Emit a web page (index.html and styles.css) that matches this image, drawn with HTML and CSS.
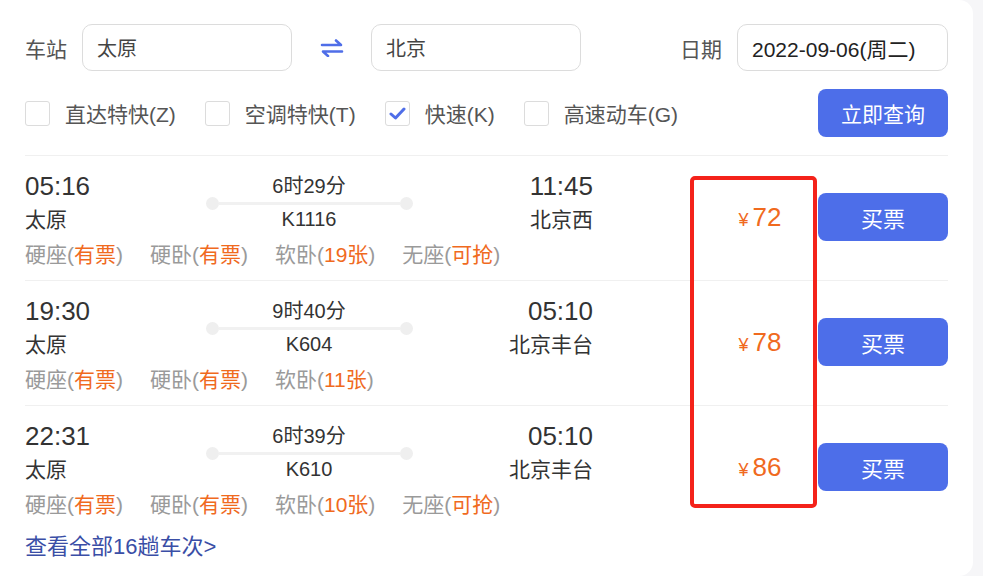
FILE: index.html
```html
<!DOCTYPE html>
<html lang="zh-CN">
<head>
    <meta charset="UTF-8">
    <meta name="viewport" content="width=device-width, initial-scale=1.0">
    <title>火车票查询</title>
    <link rel="stylesheet" href="styles.css">
</head>
<body>
    <div class="ticket-card">
        <div class="search-row">
            <span class="field-label">车站</span>
            <div class="text-input">太原</div>
            <div class="swap-icon">
                <svg width="24" height="18" viewBox="0 0 24 18" fill="none" stroke="#4f6ee8" stroke-width="2.6" stroke-linecap="round" stroke-linejoin="round">
                    <path d="M2 6h19l-5-4.5"/>
                    <path d="M22 12.5H3l5 4.5"/>
                </svg>
            </div>
            <div class="text-input">北京</div>
            <span class="field-label date-label">日期</span>
            <div class="text-input date-input">2022-09-06(周二)</div>
        </div>

        <div class="filter-row">
            <label class="check-item"><span class="check-box"></span>直达特快(Z)</label>
            <label class="check-item"><span class="check-box"></span>空调特快(T)</label>
            <label class="check-item">
                <span class="check-box checked">
                    <svg width="17" height="13" viewBox="0 0 17 13" fill="none" stroke="#4f6ee8" stroke-width="3" stroke-linecap="round" stroke-linejoin="round"><path d="M2 7l4.5 4L15 2"/></svg>
                </span>快速(K)
            </label>
            <label class="check-item"><span class="check-box"></span>高速动车(G)</label>
            <button class="search-btn">立即查询</button>
        </div>

        <div class="train-list" id="trainList">
            <!-- rows filled by script -->
        </div>

        <a class="more-link" href="#">查看全部16趟车次&gt;</a>

        <div class="price-highlight"></div>
    </div>

    <script>
        const trains = [
            { dep: '05:16', arr: '11:45', from: '太原', to: '北京西', duration: '6时29分', code: 'K1116', price: 72,
              seats: [['硬座', '有票'], ['硬卧', '有票'], ['软卧', '19张'], ['无座', '可抢']] },
            { dep: '19:30', arr: '05:10', from: '太原', to: '北京丰台', duration: '9时40分', code: 'K604', price: 78,
              seats: [['硬座', '有票'], ['硬卧', '有票'], ['软卧', '11张']] },
            { dep: '22:31', arr: '05:10', from: '太原', to: '北京丰台', duration: '6时39分', code: 'K610', price: 86,
              seats: [['硬座', '有票'], ['硬卧', '有票'], ['软卧', '10张'], ['无座', '可抢']] }
        ];

        const list = document.getElementById('trainList');
        trains.forEach(train => {
            const row = document.createElement('div');
            row.className = 'train-row';
            const seats = train.seats
                .map(s => `<span class="seat">${s[0]}(<em>${s[1]}</em>)</span>`)
                .join('');
            row.innerHTML = `
                <div class="train-info">
                    <div class="train-main">
                        <div class="col-dep">
                            <div class="time">${train.dep}</div>
                            <div class="station">${train.from}</div>
                        </div>
                        <div class="col-mid">
                            <div class="duration">${train.duration}</div>
                            <div class="track"><i></i><b></b><i></i></div>
                            <div class="code">${train.code}</div>
                        </div>
                        <div class="col-arr">
                            <div class="time">${train.arr}</div>
                            <div class="station">${train.to}</div>
                        </div>
                    </div>
                    <div class="seats">${seats}</div>
                </div>
                <div class="price"><small>¥</small>${train.price}</div>
                <button class="buy-btn">买票</button>
            `;
            list.appendChild(row);
        });
    </script>
</body>
</html>
```

FILE: styles.css
```css
body {
    margin: 0;
    background: #f6f6f8;
    font-family: "Liberation Sans", "Noto Sans CJK SC", sans-serif;
    color: #333;
}

.ticket-card {
    position: relative;
    box-sizing: border-box;
    width: 973px;
    height: 576px;
    background: white;
    border-radius: 0 14px 14px 0;
    padding: 24px 25px 0 25px;
}

/* Search Row */
.search-row {
    display: flex;
    align-items: center;
    height: 47px;
}

.field-label {
    font-size: 21px;
    color: #555;
    margin-right: 15px;
}

.date-label {
    margin-left: auto;
}

.text-input {
    box-sizing: border-box;
    width: 210px;
    height: 47px;
    border: 1px solid #dcdcdc;
    border-radius: 10px;
    padding-left: 14px;
    display: flex;
    align-items: center;
    font-size: 20px;
    color: #444;
}

.date-input {
    width: 211px;
    font-size: 21px;
    color: #222;
}

.swap-icon {
    width: 79px;
    display: flex;
    justify-content: center;
    align-items: center;
}

/* Filter Row */
.filter-row {
    display: flex;
    align-items: center;
    margin-top: 18px;
    height: 48px;
}

.check-item {
    display: flex;
    align-items: center;
    font-size: 21px;
    color: #555;
    margin-right: 29px;
}

.check-box {
    box-sizing: border-box;
    width: 25px;
    height: 25px;
    border: 1px solid #dcdcdc;
    border-radius: 3px;
    margin-right: 15px;
    display: flex;
    align-items: center;
    justify-content: center;
}

.search-btn {
    margin-left: auto;
    width: 130px;
    height: 48px;
    border: none;
    border-radius: 8px;
    background: #4d6ee9;
    color: white;
    font-family: inherit;
    font-size: 21px;
}

/* Train List */
.train-list {
    margin-top: 18px;
}

.train-row {
    box-sizing: border-box;
    height: 125px;
    border-top: 1px solid #f0f0f0;
    padding-top: 14px;
    display: flex;
}

.train-info {
    width: 568px;
}

.train-main {
    display: grid;
    grid-template-columns: 1fr 207px 1fr;
}

.time,
.station,
.duration,
.code,
.seats {
    line-height: 33px;
}

.time {
    font-size: 26px;
    color: #333;
}

.station {
    font-size: 21px;
    color: #333;
}

.col-mid {
    text-align: center;
}

.duration,
.code {
    font-size: 20px;
    color: #333;
}

.track {
    height: 0;
    display: flex;
    align-items: center;
}

.track i {
    width: 13px;
    height: 13px;
    border-radius: 50%;
    background: #efefef;
}

.track b {
    flex: 1;
    height: 3px;
    background: #f1f1f1;
}

.col-arr {
    text-align: right;
}

.seats {
    margin-top: 2px;
    font-size: 21px;
    color: #9a9a9a;
}

.seat {
    margin-right: 27px;
}

.seat em {
    font-style: normal;
    color: #f06a1e;
}

.price {
    margin-left: auto;
    width: 116px;
    align-self: center;
    margin-top: -15px;
    text-align: center;
    font-size: 26px;
    color: #f06a1e;
}

.price small {
    font-size: 18px;
    margin-right: 4px;
}

.buy-btn {
    align-self: center;
    margin-top: -16px;
    width: 130px;
    height: 48px;
    border: none;
    border-radius: 8px;
    background: #4d6ee9;
    color: white;
    font-family: inherit;
    font-size: 22px;
}

.more-link {
    display: block;
    line-height: 34px;
    font-size: 22px;
    color: #3a4ea6;
    text-decoration: none;
}

/* Highlight box drawn over the price column */
.price-highlight {
    position: absolute;
    left: 690px;
    top: 176px;
    width: 127px;
    height: 332px;
    box-sizing: border-box;
    border: 4px solid #f4221a;
    border-radius: 5px;
    pointer-events: none;
}
```
